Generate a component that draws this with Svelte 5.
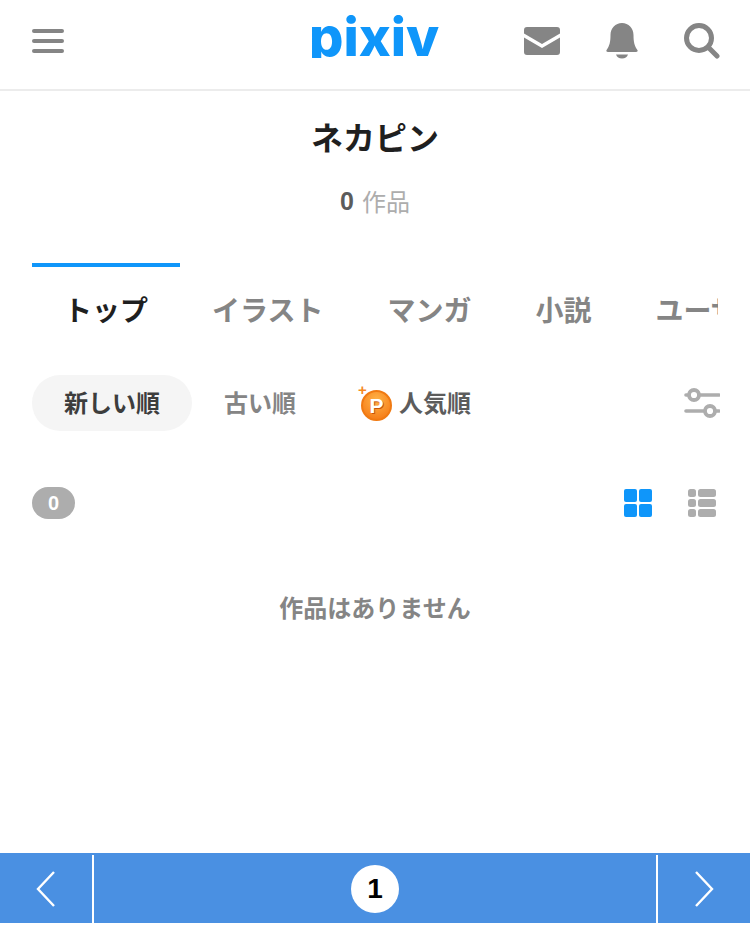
<script>
	const tabs = ['トップ', 'イラスト', 'マンガ', '小説', 'ユーザー企画'];
</script>

<div class="page">
	<header class="top">
		<button class="icon menu" aria-label="メニュー">
			<svg width="32" height="24" viewBox="0 0 32 24"><g fill="#858585"><rect y="0" width="32" height="4" rx="2" /><rect y="10" width="32" height="4" rx="2" /><rect y="20" width="32" height="4" rx="2" /></g></svg>
		</button>
		<div class="logo">pixiv</div>
		<div class="actions">
			<svg width="36" height="28" viewBox="0 0 36 28" aria-label="メッセージ">
				<path fill="#858585" d="M3 0h30a3 3 0 0 1 3 3v3.600L18 17 0 6.600V3a3 3 0 0 1 3-3zM0 10.400 18 21l18-10.600V25a3 3 0 0 1-3 3H3a3 3 0 0 1-3-3z" />
			</svg>
			<svg width="32" height="36" viewBox="0 0 32 36" aria-label="通知">
				<path fill="#858585" d="M16 0c6.500 0 11.500 5 11.500 12 0 7 1 11 3.900 15 .7 1 0 2-1.200 2H1.800C.6 29-.1 28 .6 27 3.500 23 4.500 19 4.500 12 4.500 5 9.500 0 16 0z" />
				<path fill="#858585" d="M10 31.500h12c-.8 2.500-3 4-6 4s-5.200-1.500-6-4z" />
			</svg>
			<svg width="36" height="36" viewBox="0 0 36 36" aria-label="検索">
				<circle cx="15" cy="15" r="12.500" fill="none" stroke="#858585" stroke-width="5" />
				<path d="M24.500 24.500 33 33" stroke="#858585" stroke-width="5" stroke-linecap="round" />
			</svg>
		</div>
	</header>

	<h1 class="name">ネカピン</h1>
	<p class="count"><b>0</b><span>作品</span></p>

	<nav class="tabs">
		{#each tabs as tab, i}
			<div class="tab" class:active={i === 0}>{tab}</div>
		{/each}
	</nav>

	<div class="sorts">
		<div class="sort current"><span>新しい順</span></div>
		<div class="sort"><span>古い順</span></div>
		<div class="sort popular">
			<span class="coin"><span class="spark">+</span><span class="p">P</span></span>
			<span>人気順</span>
		</div>
		<svg class="filter" width="36" height="30" viewBox="0 0 36 30" aria-label="絞り込み">
			<g fill="none" stroke="#adadad">
				<path d="M2 7h33M2 23h33" stroke-width="3.600" stroke-linecap="round" />
				<circle cx="10" cy="7" r="5" stroke-width="3.800" fill="#fff" />
				<circle cx="26" cy="23" r="5" stroke-width="3.800" fill="#fff" />
			</g>
		</svg>
	</div>

	<div class="meta">
		<span class="badge">0</span>
		<div class="views">
			<svg width="28" height="28" viewBox="0 0 28 28" aria-label="グリッド">
				<g fill="#0f96fa"><rect width="13" height="13" rx="2" /><rect x="15" width="13" height="13" rx="2" /><rect y="15" width="13" height="13" rx="2" /><rect x="15" y="15" width="13" height="13" rx="2" /></g>
			</svg>
			<svg width="28" height="28" viewBox="0 0 28 28" aria-label="リスト">
				<g fill="#adadad">
					<rect width="8" height="8" rx="2.500" /><rect x="10" width="18" height="8" rx="2.500" />
					<rect y="10" width="8" height="8" rx="2.500" /><rect x="10" y="10" width="18" height="8" rx="2.500" />
					<rect y="20" width="8" height="8" rx="2.500" /><rect x="10" y="20" width="18" height="8" rx="2.500" />
				</g>
			</svg>
		</div>
	</div>

	<p class="empty">作品はありません</p>

	<div class="pager">
		<div class="arrow left">
			<svg width="22" height="36" viewBox="0 0 22 36"><path d="M19 1 3 18l16 17" fill="none" stroke="#fff" stroke-width="2.400" /></svg>
		</div>
		<div class="pages"><span class="current-page">1</span></div>
		<div class="arrow right">
			<svg width="22" height="36" viewBox="0 0 22 36"><path d="M3 1l16 17L3 35" fill="none" stroke="#fff" stroke-width="2.400" /></svg>
		</div>
	</div>
</div>

<style>
	:global(body) {
		margin: 0;
		background: #fff;
	}
	.page {
		width: 750px;
		height: 945px;
		overflow: hidden;
		display: flex;
		flex-direction: column;
		font-family: "Noto Sans CJK JP", "Liberation Sans", sans-serif;
		color: #1f1f1f;
	}
	.top {
		flex: 0 0 auto;
		box-sizing: border-box;
		height: 91px;
		border-bottom: 2px solid #ececec;
		display: flex;
		align-items: center;
		padding: 0 30px 8px 32px;
		position: relative;
	}
	.icon {
		background: none;
		border: 0;
		padding: 0;
		display: flex;
	}
	/* descender of the p is short in the real logo, so the box clips it */
	.logo {
		position: absolute;
		left: 309px;
		top: 2px;
		height: 56px;
		overflow: hidden;
		font-family: "Inter", sans-serif;
		font-weight: 800;
		font-size: 54px;
		line-height: 70px;
		color: #0f96fa;
	}
	.actions {
		margin-left: auto;
		display: flex;
		align-items: center;
		gap: 46px;
	}
	.name {
		margin: 24px 0 0;
		font-size: 32px;
		line-height: 42px;
		font-weight: 700;
		text-align: center;
	}
	.count {
		margin: 27px 0 0;
		display: flex;
		justify-content: center;
		gap: 8px;
		font-size: 24px;
		line-height: 34px;
		color: #adadad;
	}
	.count b {
		color: #5c5c5c;
		font-family: "Liberation Sans", sans-serif;
		font-size: 25px;
	}
	.tabs {
		margin: 45px 32px 0;
		display: flex;
		overflow: hidden;
		white-space: nowrap;
	}
	.tab {
		flex: 0 0 auto;
		padding: 22px 32px 20px;
		border-top: 4px solid transparent;
		font-size: 28px;
		line-height: 40px;
		font-weight: 700;
		color: #858585;
	}
	.tab.active {
		color: #1f1f1f;
		border-top-color: #0f96fa;
	}
	.sorts {
		margin: 26px 30px 0 32px;
		display: flex;
		align-items: center;
	}
	.sort {
		height: 56px;
		padding: 0 32px;
		border-radius: 28px;
		display: flex;
		align-items: center;
		font-size: 24px;
		font-weight: 700;
		color: #858585;
	}
	.sort > span:last-child {
		margin-bottom: 4px;
	}
	.sort.current {
		background: #f5f5f5;
		color: #3d3d3d;
	}
	.sort.popular {
		color: #5c5c5c;
		gap: 7px;
	}
	.coin {
		position: relative;
		width: 31px;
		height: 31px;
		margin: 5px 0 0 1px;
		border-radius: 50%;
		box-sizing: border-box;
		border: 2px solid #f07a12;
		display: flex;
		align-items: center;
		justify-content: center;
		background: radial-gradient(circle at 50% 30%, #ffb347, #f4730f);
	}
	.p {
		font-family: "Liberation Sans", sans-serif;
		font-size: 21px;
		line-height: 1;
		font-weight: 700;
		color: #fff;
		text-shadow: 1px 1px 0 #c9540a;
	}
	.spark {
		position: absolute;
		left: -5px;
		top: -10px;
		font-family: "Liberation Sans", sans-serif;
		font-size: 15px;
		line-height: 1;
		font-weight: 700;
		color: #f58a1f;
	}
	.filter {
		margin-left: auto;
	}
	.meta {
		margin: 56px 34px 0 32px;
		display: flex;
		align-items: center;
		justify-content: space-between;
	}
	.badge {
		min-width: 43px;
		height: 32px;
		border-radius: 16px;
		background: #adadad;
		color: #fff;
		display: flex;
		align-items: center;
		justify-content: center;
		font-family: "Liberation Sans", sans-serif;
		font-size: 20px;
		font-weight: 700;
	}
	.views {
		display: flex;
		gap: 36px;
	}
	.empty {
		margin: 70px 0 0;
		text-align: center;
		font-size: 24px;
		line-height: 36px;
		font-weight: 700;
		color: #858585;
	}
	.pager {
		margin-top: auto;
		margin-bottom: 22px;
		height: 70px;
		background: #4a90e2;
		display: flex;
	}
	.arrow {
		flex: 0 0 92px;
		display: flex;
		align-items: center;
		justify-content: center;
		padding-top: 1px;
		box-sizing: border-box;
	}
	.pages {
		flex: 1;
		display: flex;
		align-items: center;
		justify-content: center;
		margin-top: 2px;
		border-left: 2px solid #fff;
		border-right: 2px solid #fff;
	}
	.current-page {
		width: 48px;
		height: 48px;
		border-radius: 50%;
		background: #fff;
		color: #000;
		display: flex;
		align-items: center;
		justify-content: center;
		font-family: "Liberation Sans", sans-serif;
		font-size: 28px;
		font-weight: 700;
	}
</style>
